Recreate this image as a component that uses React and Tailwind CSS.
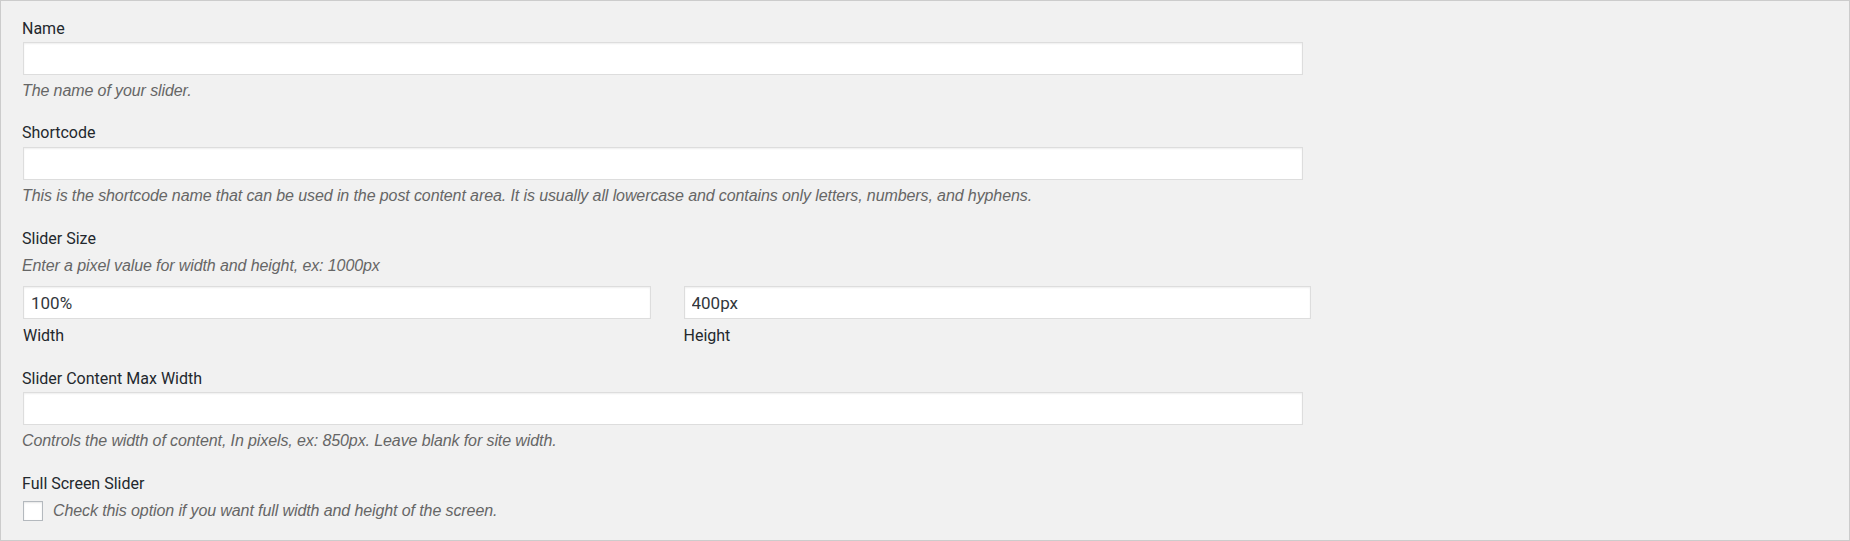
import React from "react";

const labelCls = "block h-[20px] leading-[20px] text-[16px] text-[#23282d] font-['Roboto',sans-serif]";
const helpCls = "h-[20px] leading-[20px] text-[16px] italic tracking-[-0.1px] text-[#666] font-['Liberation_Sans',sans-serif] whitespace-nowrap";
const inputCls =
  "box-border block h-[33px] border border-[#ddd] bg-white px-[7px] text-[17px] text-[#32373c] font-['Roboto',sans-serif] shadow-[inset_0_1px_2px_rgba(0,0,0,0.07)] outline-none";

export default function App() {
  return (
    <div className="box-border h-[541px] w-[1850px] overflow-hidden border border-[#ccc] bg-[#f1f1f1] pl-[21px] pt-[18px]">
      {/* Name */}
      <label className={labelCls}>Name</label>
      <input type="text" defaultValue="" className={`${inputCls} ml-[1px] mt-[3px] w-[1280px]`} />
      <p className={`${helpCls} mt-[6px]`}>The name of your slider.</p>

      {/* Shortcode */}
      <label className={`${labelCls} mt-[22px]`}>Shortcode</label>
      <input type="text" defaultValue="" className={`${inputCls} ml-[1px] mt-[4px] w-[1280px]`} />
      <p className={`${helpCls} mt-[6px]`}>
        This is the shortcode name that can be used in the post content area. It is usually all lowercase and contains only letters, numbers, and hyphens.
      </p>

      {/* Slider Size */}
      <label className={`${labelCls} mt-[23px]`}>Slider Size</label>
      <p className={`${helpCls} mt-[7px]`}>Enter a pixel value for width and height, ex: 1000px</p>
      <div className="ml-[1px] mt-[10px] grid w-[1288px] grid-cols-2 gap-x-[33px]">
        <div className="flex flex-col">
          <input type="text" defaultValue="100%" className={`${inputCls} w-full`} />
          <span className={`${labelCls} mt-[7px]`}>Width</span>
        </div>
        <div className="flex flex-col">
          <input type="text" defaultValue="400px" className={`${inputCls} w-full`} />
          <span className={`${labelCls} mt-[7px]`}>Height</span>
        </div>
      </div>

      {/* Slider Content Max Width */}
      <label className={`${labelCls} mt-[23px]`}>Slider Content Max Width</label>
      <input type="text" defaultValue="" className={`${inputCls} ml-[1px] mt-[3px] w-[1280px]`} />
      <p className={`${helpCls} mt-[6px]`}>Controls the width of content, In pixels, ex: 850px. Leave blank for site width.</p>

      {/* Full Screen Slider */}
      <label className={`${labelCls} mt-[23px]`}>Full Screen Slider</label>
      <div className="mt-[7px] flex items-center gap-[10px]">
        <input
          type="checkbox"
          className="m-0 ml-[1px] box-border h-[20px] w-[20px] appearance-none border border-[#b4b9be] bg-white shadow-[inset_0_1px_2px_rgba(0,0,0,0.1)]"
        />
        <span className={helpCls}>Check this option if you want full width and height of the screen.</span>
      </div>
    </div>
  );
}
